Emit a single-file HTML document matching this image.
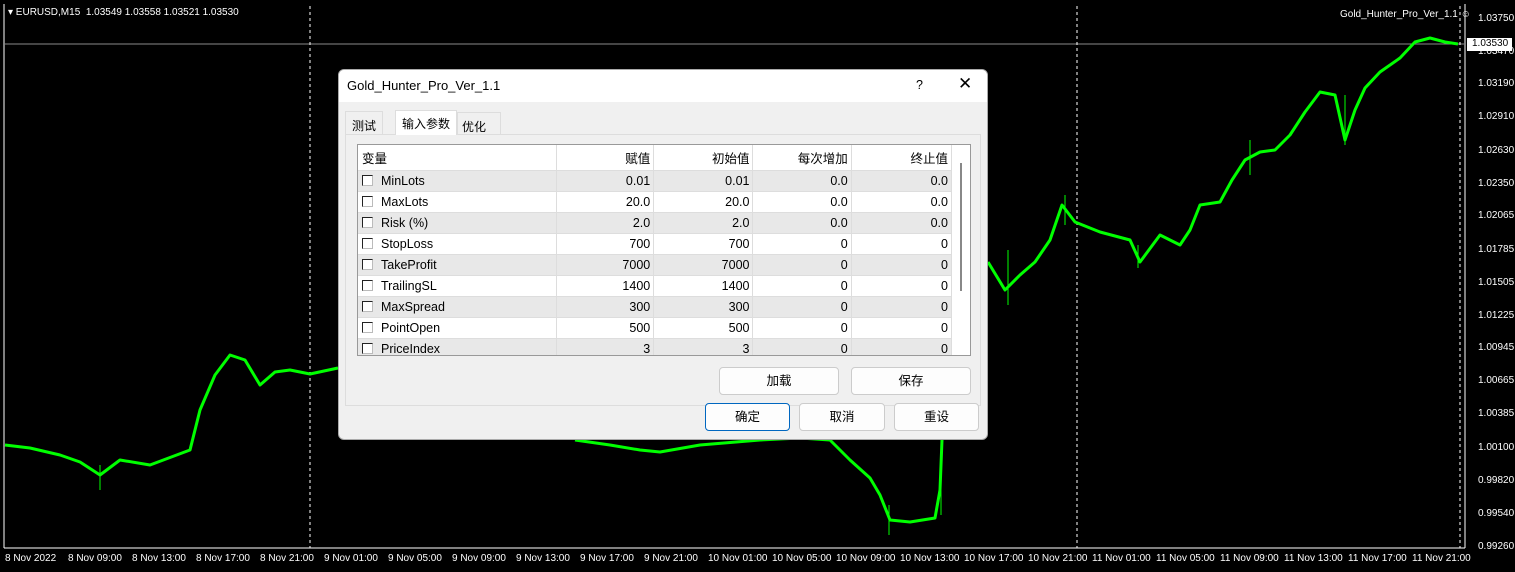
<!DOCTYPE html>
<html><head><meta charset="utf-8"><style>
*{margin:0;padding:0;box-sizing:border-box}
body{width:1515px;height:572px;background:#000;overflow:hidden;position:relative;font-family:"Liberation Sans","Noto Sans CJK SC",sans-serif}
.ax{position:absolute;color:#fff;font-size:10px;white-space:nowrap}
.dlg{position:absolute;left:338px;top:69px;width:650px;height:371px;background:#f0f0f0;border:1px solid #aaa;border-radius:6px;overflow:hidden;font-size:12.5px;color:#000}
.tb{height:32px;background:#fff;position:relative}
.tb span{position:absolute;top:8px}
.panel{position:absolute;left:6px;top:64px;width:636px;height:272px;border:1px solid #ddd;background:#f0f0f0}
table{position:absolute;width:594px;border-collapse:collapse;background:#fff;font-size:12.5px}
.tw{position:absolute;left:18px;top:74px;width:614px;height:212px;border:1px solid #999;background:#fff;overflow:hidden}
td{height:21px;border-right:1px solid #ddd;border-bottom:1px solid #ddd;text-align:right;padding-right:3px}
td:first-child{text-align:left;padding-left:4px}
tr.h td{height:25px;background:#fff}
tr.g td{background:#e8e8e8}
.cb{display:inline-block;width:11px;height:11px;border:1px solid #222;border-right-color:#bbb;border-bottom-color:#bbb;background:#fff;margin-right:8px;vertical-align:-1px}
.btn{position:absolute;height:28px;background:#fdfdfd;border:1px solid #ccc;border-radius:4px;text-align:center;line-height:26px;font-size:12.5px}
</style></head><body>
<svg width="1515" height="572" style="position:absolute;left:0;top:0">
<line x1="4" y1="548" x2="1465" y2="548" stroke="#fff"/>
<line x1="1465" y1="4" x2="1465" y2="548" stroke="#fff"/>
<line x1="4" y1="4" x2="4" y2="548" stroke="#fff"/>
<line x1="4" y1="44" x2="1465" y2="44" stroke="#8a8a8a"/>
<g stroke="#fff" stroke-dasharray="3,3"><line x1="310" y1="6" x2="310" y2="548"/><line x1="1077" y1="6" x2="1077" y2="548"/><line x1="1460" y1="6" x2="1460" y2="548"/></g>
<g fill="none" stroke="#00ff00" stroke-width="3" stroke-linejoin="round">
<polyline points="5,445 30,448 60,455 80,462 100,475 120,460 150,465 190,450 200,410 215,375 230,355 245,360 260,385 275,372 290,370 310,374 338,368"/>
<polyline points="575,440 610,445 640,450 660,452 700,445 760,440 800,438 830,440 850,460 870,478 880,495 890,520 910,522 935,518 940,490 942,440"/>
<polyline points="988,262 1005,290 1020,275 1035,262 1050,240 1062,205 1075,222 1100,232 1130,240 1140,262 1160,235 1180,245 1190,230 1200,205 1220,202 1232,180 1245,160 1260,152 1275,150 1290,135 1305,112 1320,92 1335,95 1345,140 1355,110 1365,88 1380,72 1400,58 1415,42 1430,38 1445,42 1458,44"/>
</g>
<g stroke="#00ff00" stroke-width="1"><line x1="1065" y1="195" x2="1065" y2="225"/><line x1="1345" y1="95" x2="1345" y2="145"/><line x1="1008" y1="250" x2="1008" y2="305"/><line x1="941" y1="430" x2="941" y2="515"/><line x1="889" y1="505" x2="889" y2="535"/><line x1="100" y1="465" x2="100" y2="490"/><line x1="1138" y1="245" x2="1138" y2="268"/><line x1="1250" y1="140" x2="1250" y2="175"/></g>
</svg>
<div class="ax" style="left:8px;top:7px">▾ EURUSD,M15&nbsp; 1.03549 1.03558 1.03521 1.03530</div>
<div class="ax" style="left:1340px;top:9px">Gold_Hunter_Pro_Ver_1.1 ☺</div>
<div class="ax" style="left:1478px;top:13px">1.03750</div>
<div class="ax" style="left:1478px;top:46px">1.03470</div>
<div style="position:absolute;left:1467px;top:38px;width:45px;height:13px;background:#fff;color:#000;font-size:10px;padding-left:5px">1.03530</div>
<div class="ax" style="left:1478px;top:78px">1.03190</div>
<div class="ax" style="left:1478px;top:111px">1.02910</div>
<div class="ax" style="left:1478px;top:145px">1.02630</div>
<div class="ax" style="left:1478px;top:178px">1.02350</div>
<div class="ax" style="left:1478px;top:210px">1.02065</div>
<div class="ax" style="left:1478px;top:244px">1.01785</div>
<div class="ax" style="left:1478px;top:277px">1.01505</div>
<div class="ax" style="left:1478px;top:310px">1.01225</div>
<div class="ax" style="left:1478px;top:342px">1.00945</div>
<div class="ax" style="left:1478px;top:375px">1.00665</div>
<div class="ax" style="left:1478px;top:408px">1.00385</div>
<div class="ax" style="left:1478px;top:442px">1.00100</div>
<div class="ax" style="left:1478px;top:475px">0.99820</div>
<div class="ax" style="left:1478px;top:508px">0.99540</div>
<div class="ax" style="left:1478px;top:541px">0.99260</div>
<div class="ax" style="left:5px;top:553px">8 Nov 2022</div>
<div class="ax" style="left:68px;top:553px">8 Nov 09:00</div>
<div class="ax" style="left:132px;top:553px">8 Nov 13:00</div>
<div class="ax" style="left:196px;top:553px">8 Nov 17:00</div>
<div class="ax" style="left:260px;top:553px">8 Nov 21:00</div>
<div class="ax" style="left:324px;top:553px">9 Nov 01:00</div>
<div class="ax" style="left:388px;top:553px">9 Nov 05:00</div>
<div class="ax" style="left:452px;top:553px">9 Nov 09:00</div>
<div class="ax" style="left:516px;top:553px">9 Nov 13:00</div>
<div class="ax" style="left:580px;top:553px">9 Nov 17:00</div>
<div class="ax" style="left:644px;top:553px">9 Nov 21:00</div>
<div class="ax" style="left:708px;top:553px">10 Nov 01:00</div>
<div class="ax" style="left:772px;top:553px">10 Nov 05:00</div>
<div class="ax" style="left:836px;top:553px">10 Nov 09:00</div>
<div class="ax" style="left:900px;top:553px">10 Nov 13:00</div>
<div class="ax" style="left:964px;top:553px">10 Nov 17:00</div>
<div class="ax" style="left:1028px;top:553px">10 Nov 21:00</div>
<div class="ax" style="left:1092px;top:553px">11 Nov 01:00</div>
<div class="ax" style="left:1156px;top:553px">11 Nov 05:00</div>
<div class="ax" style="left:1220px;top:553px">11 Nov 09:00</div>
<div class="ax" style="left:1284px;top:553px">11 Nov 13:00</div>
<div class="ax" style="left:1348px;top:553px">11 Nov 17:00</div>
<div class="ax" style="left:1412px;top:553px">11 Nov 21:00</div>

<div class="dlg">
 <div class="tb"><span style="left:8px;font-size:13px">Gold_Hunter_Pro_Ver_1.1</span><span style="left:577px">?</span><span style="left:619px;font-size:17px;top:4px">✕</span></div>
 <div style="position:absolute;left:6px;top:41px;width:38px;height:24px;border:1px solid #ddd;border-bottom:none;padding:5px 0 0 6px;font-size:12px">测试</div>
 <div style="position:absolute;left:56px;top:40px;width:62px;height:25px;background:#fff;border:1px solid #ddd;border-bottom:none;padding:4px 0 0 6px;font-size:12px;z-index:2">输入参数</div>
 <div style="position:absolute;left:118px;top:42px;width:44px;height:23px;border:1px solid #ddd;border-bottom:none;padding:5px 0 0 4px;font-size:12px">优化</div>
 <div class="panel"></div>
 <div class="tw">
 <table style="left:0;top:0">
 <colgroup><col style="width:198px"><col style="width:97px"><col style="width:99px"><col style="width:98px"><col style="width:100px"></colgroup>
 <tr class="h"><td>变量</td><td>赋值</td><td>初始值</td><td>每次增加</td><td>终止值</td></tr>
 <tr class="g"><td><span class="cb"></span>MinLots</td><td>0.01</td><td>0.01</td><td>0.0</td><td>0.0</td></tr>
 <tr><td><span class="cb"></span>MaxLots</td><td>20.0</td><td>20.0</td><td>0.0</td><td>0.0</td></tr>
 <tr class="g"><td><span class="cb"></span>Risk (%)</td><td>2.0</td><td>2.0</td><td>0.0</td><td>0.0</td></tr>
 <tr><td><span class="cb"></span>StopLoss</td><td>700</td><td>700</td><td>0</td><td>0</td></tr>
 <tr class="g"><td><span class="cb"></span>TakeProfit</td><td>7000</td><td>7000</td><td>0</td><td>0</td></tr>
 <tr><td><span class="cb"></span>TrailingSL</td><td>1400</td><td>1400</td><td>0</td><td>0</td></tr>
 <tr class="g"><td><span class="cb"></span>MaxSpread</td><td>300</td><td>300</td><td>0</td><td>0</td></tr>
 <tr><td><span class="cb"></span>PointOpen</td><td>500</td><td>500</td><td>0</td><td>0</td></tr>
 <tr class="g"><td><span class="cb"></span>PriceIndex</td><td>3</td><td>3</td><td>0</td><td>0</td></tr>
 </table>
 <div style="position:absolute;left:594px;top:0;width:20px;height:212px;background:#fff"></div>
 <div style="position:absolute;left:602px;top:18px;width:2px;height:128px;background:#888"></div>
 </div>
 <div class="btn" style="left:380px;top:297px;width:120px">加载</div>
 <div class="btn" style="left:512px;top:297px;width:120px">保存</div>
 <div class="btn" style="left:366px;top:333px;width:85px;border:1px solid #0067c0">确定</div>
 <div class="btn" style="left:460px;top:333px;width:86px">取消</div>
 <div class="btn" style="left:555px;top:333px;width:85px">重设</div>
</div>
</body></html>
